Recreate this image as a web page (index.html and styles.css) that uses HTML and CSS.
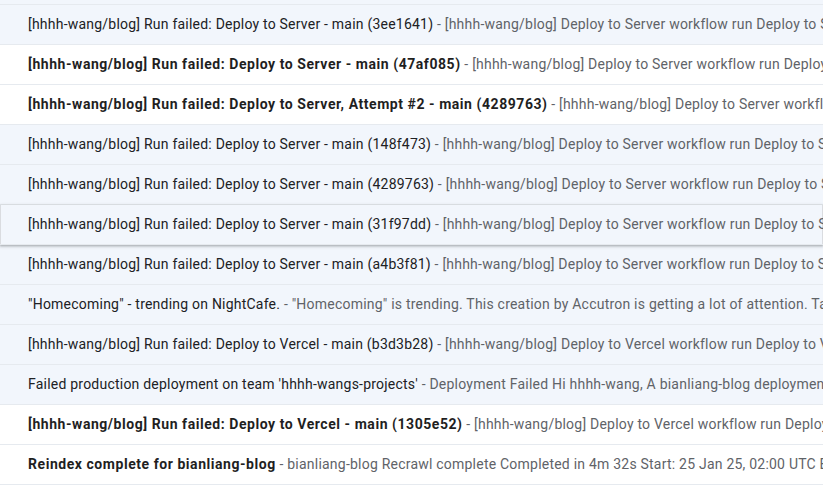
FILE: index.html
```html
<!DOCTYPE html>
<html>
<head>
<meta charset="utf-8">
<link rel="stylesheet" href="styles.css">
</head>
<body>
<div class="list">
  <div class="row read stub"></div>
  <div class="row read"><span class="subj">[hhhh-wang/blog] Run failed: Deploy to Server - main (3ee1641)</span><span class="snip"> - [hhhh-wang/blog] Deploy to Server workflow run Deploy to Server: Some jobs were not successful</span></div>
  <div class="row unread"><span class="subj">[hhhh-wang/blog] Run failed: Deploy to Server - main (47af085)</span><span class="snip"> - [hhhh-wang/blog] Deploy to Server workflow run Deploy to Server: Some jobs were not successful</span></div>
  <div class="row unread"><span class="subj">[hhhh-wang/blog] Run failed: Deploy to Server, Attempt #2 - main (4289763)</span><span class="snip"> - [hhhh-wang/blog] Deploy to Server workflow run Deploy to Server</span></div>
  <div class="row read"><span class="subj">[hhhh-wang/blog] Run failed: Deploy to Server - main (148f473)</span><span class="snip"> - [hhhh-wang/blog] Deploy to Server workflow run Deploy to Server: Some jobs were not successful</span></div>
  <div class="row read"><span class="subj">[hhhh-wang/blog] Run failed: Deploy to Server - main (4289763)</span><span class="snip"> - [hhhh-wang/blog] Deploy to Server workflow run Deploy to Server: Some jobs were not successful</span></div>
  <div class="row read hover"><span class="subj">[hhhh-wang/blog] Run failed: Deploy to Server - main (31f97dd)</span><span class="snip"> - [hhhh-wang/blog] Deploy to Server workflow run Deploy to Server: Some jobs were not successful</span></div>
  <div class="row read"><span class="subj">[hhhh-wang/blog] Run failed: Deploy to Server - main (a4b3f81)</span><span class="snip"> - [hhhh-wang/blog] Deploy to Server workflow run Deploy to Server: Some jobs were not successful</span></div>
  <div class="row read"><span class="subj">"Homecoming" - trending on NightCafe.</span><span class="snip"> - "Homecoming" is trending. This creation by Accutron is getting a lot of attention. Take a look</span></div>
  <div class="row read"><span class="subj">[hhhh-wang/blog] Run failed: Deploy to Vercel - main (b3d3b28)</span><span class="snip"> - [hhhh-wang/blog] Deploy to Vercel workflow run Deploy to Vercel: Some jobs were not successful</span></div>
  <div class="row read"><span class="subj">Failed production deployment on team 'hhhh-wangs-projects'</span><span class="snip"> - Deployment Failed Hi hhhh-wang, A bianliang-blog deployment failed</span></div>
  <div class="row unread"><span class="subj">[hhhh-wang/blog] Run failed: Deploy to Vercel - main (1305e52)</span><span class="snip"> - [hhhh-wang/blog] Deploy to Vercel workflow run Deploy to Vercel: Some jobs were not successful</span></div>
  <div class="row unread"><span class="subj">Reindex complete for bianliang-blog</span><span class="snip"> - bianliang-blog Recrawl complete Completed in 4m 32s Start: 25 Jan 25, 02:00 UTC End: 25 Jan 25</span></div>
</div>
</body>
</html>
```
FILE: styles.css
```css
html, body {
  margin: 0;
  padding: 0;
  background: #ffffff;
}
body {
  width: 823px;
  height: 485px;
  overflow: hidden;
  font-family: Roboto, "Liberation Sans", Arial, sans-serif;
  font-size: 14px;
}
.list {
  display: flex;
  flex-direction: column;
}
.row {
  height: 39px;
  line-height: 39px;
  border-bottom: 1px solid #e6eaef;
  padding-left: 28px;
  white-space: nowrap;
  overflow: hidden;
  position: relative;
  flex-shrink: 0;
  letter-spacing: 0.22px;
}
.row.stub {
  height: 4px;
}
.read {
  background: #f2f6fc;
}
.unread {
  background: #ffffff;
}
.subj {
  color: #202124;
}
.unread .subj {
  font-weight: 700;
  color: #1f1f1f;
  letter-spacing: 0.55px;
}
.snip {
  color: #5f6368;
}
.hover {
  z-index: 2;
  box-shadow: inset 1px 0 0 #dadce0, inset -1px 0 0 #dadce0, 0 1px 2px 0 rgba(60,64,67,.3), 0 1px 3px 1px rgba(60,64,67,.15);
}
```
